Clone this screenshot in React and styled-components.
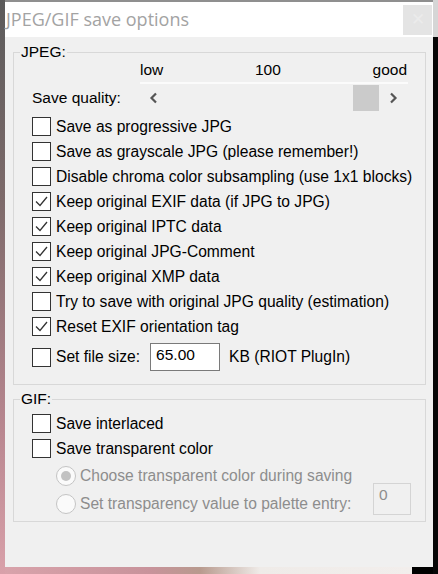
import React from 'react';
import styled, { createGlobalStyle } from 'styled-components';

const GlobalStyle = createGlobalStyle`
  html, body {
    margin: 0;
    padding: 0;
  }
  body {
    font-family: "Liberation Sans", Arial, sans-serif;
    background: #000;
  }
`;

const Screen = styled.div`
  width: 438px;
  height: 574px;
  overflow: hidden;
  padding-top: 2px;
  box-sizing: border-box;
  background:
    linear-gradient(#d6d6d6 0 37px, #070707 37px) right top / 5px 100% no-repeat,
    linear-gradient(#5b5b5b, #7d6a6a 35%, #b98790 75%, #d9a1aa) left top / 5px 100% no-repeat,
    linear-gradient(to right, #d9a3ab 0, #c8939b 150px, #b89a8e 200px, #efebe8 260px, #f2eeec 412px, #000 412px) left bottom / 100% 8px no-repeat,
    #8f8f8f;
`;

const Dialog = styled.div`
  margin-left: 5px;
  width: 428px;
  height: 565px;
  background: #f0f0f0;
  display: flex;
  flex-direction: column;
`;

const TitleBar = styled.div`
  height: 35px;
  background: #fff;
  display: flex;
  align-items: center;
  justify-content: space-between;
  flex-shrink: 0;
`;

const Title = styled.span`
  font-family: "Open Sans", "Liberation Sans", sans-serif;
  font-size: 18px;
  color: #a3a3a3;
  padding-left: 1px;
  padding-bottom: 1px;
`;

const CloseButton = styled.div`
  width: 29px;
  height: 30px;
  margin-right: 1px;
  background: #e4e4e4;
  color: #ebebeb;
  font-size: 17px;
  display: flex;
  align-items: center;
  justify-content: center;
`;

const Body = styled.div`
  padding: 6px 7px 0 8px;
  display: flex;
  flex-direction: column;
  gap: 5px;
`;

const Group = styled.fieldset`
  margin: 0;
  border: 1px solid #d8d8d8;
  padding: ${(p) => p.$pad};
  min-width: 0;
  display: flex;
  flex-direction: column;
`;

const Legend = styled.legend`
  font-size: 15.5px;
  color: #000;
  padding: 0 1px;
  margin-left: -12px;
  line-height: 18px;
`;

const QualityBlock = styled.div`
  display: grid;
  grid-template-columns: 110px 266px;
  margin-bottom: 3px;
`;

const Scale = styled.div`
  grid-column: 2;
  display: flex;
  justify-content: space-between;
  align-items: flex-start;
  height: 21px;
  line-height: 18px;
  border-bottom: 2px solid #fbfbfb;
  font-size: 15.5px;
  padding-right: 1px;
  margin-left: -2px;
`;

const QualityLabel = styled.div`
  font-size: 15.5px;
  display: flex;
  align-items: center;
  height: 27px;
`;

const Track = styled.div`
  display: flex;
  align-items: center;
  height: 27px;
  padding-left: 7px;
`;

const Arrow = styled.svg`
  width: 9px;
  height: 12px;
  flex-shrink: 0;
`;

const TrackGap = styled.div`
  flex: ${(p) => p.$fixed ? `0 0 ${p.$fixed}px` : 1};
`;

const Thumb = styled.div`
  width: 26px;
  height: 26px;
  background: #cbcbcb;
  margin-right: 10px;
`;

const Row = styled.label`
  display: flex;
  align-items: center;
  height: ${(p) => p.$h || 25}px;
  font-size: 15.6px;
  white-space: nowrap;
  color: ${(p) => (p.$disabled ? '#8d8d8d' : '#000')};
  padding-left: ${(p) => p.$indent || 0}px;
`;

const Box = styled.span`
  width: 17px;
  height: 17px;
  border: 1px solid #333;
  background: #fff;
  margin-right: 5px;
  flex-shrink: 0;
  display: flex;
  align-items: center;
  justify-content: center;
`;

const Radio = styled.span`
  width: 18px;
  height: 18px;
  border-radius: 50%;
  border: 1px solid #c4c4c4;
  background: #fafafa;
  margin-right: 4px;
  flex-shrink: 0;
  display: flex;
  align-items: center;
  justify-content: center;
  &::after {
    content: '';
    width: 10px;
    height: 10px;
    border-radius: 50%;
    background: ${(p) => (p.$on ? '#c2c2c2' : 'transparent')};
  }
`;

const SizeInput = styled.div`
  width: 63px;
  height: 24px;
  border: 1px solid #7a7a7a;
  background: #fff;
  margin: 0 9px 0 10px;
  padding: 2px 0 0 5px;
  font-size: 15.5px;
  line-height: 18px;
`;

const PaletteInput = styled.div`
  width: 31px;
  height: 28px;
  border: 1px solid #d4d4d4;
  background: #f0f0f0;
  color: #8d8d8d;
  margin-left: auto;
  margin-right: 8px;
  margin-top: -10px;
  padding: 2px 0 0 5px;
  font-size: 15.5px;
  line-height: 18px;
`;

const Check = () => (
  <svg width="15" height="15" viewBox="0 0 15 15">
    <polyline points="2,7.5 6,11.5 13,3" fill="none" stroke="#333" strokeWidth="1.3" />
  </svg>
);

const CheckRow = ({ checked, children }) => (
  <Row>
    <Box>{checked && <Check />}</Box>
    {children}
  </Row>
);

const jpegOptions = [
  ['Save as progressive JPG', false],
  ['Save as grayscale JPG (please remember!)', false],
  ['Disable chroma color subsampling (use 1x1 blocks)', false],
  ['Keep original EXIF data (if JPG to JPG)', true],
  ['Keep original IPTC data', true],
  ['Keep original JPG-Comment', true],
  ['Keep original XMP data', true],
  ['Try to save with original JPG quality (estimation)', false],
  ['Reset EXIF orientation tag', true],
];

export default function App() {
  return (
    <>
      <GlobalStyle />
      <Screen>
        <Dialog>
          <TitleBar>
            <Title>JPEG/GIF save options</Title>
            <CloseButton>✕</CloseButton>
          </TitleBar>
          <Body>
            <Group $pad="0 6px 9px 18px">
              <Legend>JPEG:</Legend>
              <QualityBlock>
                <Scale>
                  <span>low</span>
                  <span>100</span>
                  <span>good</span>
                </Scale>
                <QualityLabel>Save quality:</QualityLabel>
                <Track>
                  <Arrow viewBox="0 0 9 12">
                    <polyline points="7,1.5 2.5,6 7,10.5" fill="none" stroke="#555" strokeWidth="2.2" />
                  </Arrow>
                  <TrackGap />
                  <Thumb />
                  <Arrow viewBox="0 0 9 12">
                    <polyline points="2,1.5 6.5,6 2,10.5" fill="none" stroke="#555" strokeWidth="2.2" />
                  </Arrow>
                  <TrackGap $fixed={10} />
                </Track>
              </QualityBlock>
              {jpegOptions.map(([text, checked]) => (
                <CheckRow key={text} checked={checked}>{text}</CheckRow>
              ))}
              <Row $h={36}>
                <Box />
                Set file size:
                <SizeInput>65.00</SizeInput>
                KB (RIOT PlugIn)
              </Row>
            </Group>
            <Group $pad="3px 6px 4px 18px">
              <Legend>GIF:</Legend>
              <CheckRow>Save interlaced</CheckRow>
              <CheckRow>Save transparent color</CheckRow>
              <Row $disabled $indent={24} $h={29}>
                <Radio $on />
                Choose transparent color during saving
              </Row>
              <Row $disabled $indent={24} $h={27}>
                <Radio />
                Set transparency value to palette entry:
                <PaletteInput>0</PaletteInput>
              </Row>
            </Group>
          </Body>
        </Dialog>
      </Screen>
    </>
  );
}
